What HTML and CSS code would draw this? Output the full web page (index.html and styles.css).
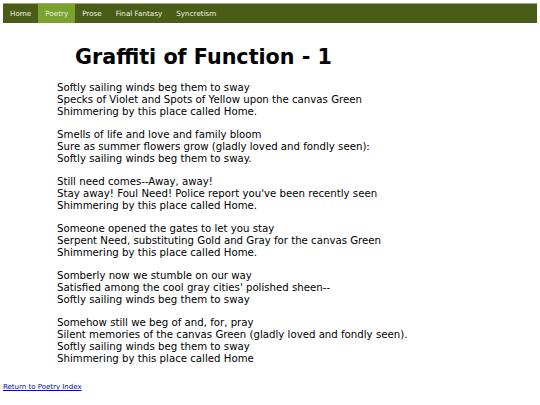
FILE: index.html
```html
<!DOCTYPE html>
<html>
<head>
<meta charset="utf-8">
<link rel="stylesheet" href="styles.css">
</head>
<body>
<nav class="nav">
  <a class="nav-item" href="#">Home</a>
  <a class="nav-item active" href="#">Poetry</a>
  <a class="nav-item" href="#">Prose</a>
  <a class="nav-item" href="#">Final Fantasy</a>
  <a class="nav-item" href="#">Syncretism</a>
</nav>
<main class="content">
  <h1 class="title">Graffiti of Function - 1</h1>
  <div class="poem">
    <p class="stanza">Softly sailing winds beg them to sway<br>Specks of Violet and Spots of Yellow upon the canvas Green<br>Shimmering by this place called Home.</p>
    <p class="stanza">Smells of life and love and family bloom<br>Sure as summer flowers grow (gladly loved and fondly seen):<br>Softly sailing winds beg them to sway.</p>
    <p class="stanza">Still need comes--Away, away!<br>Stay away! Foul Need! Police report you've been recently seen<br>Shimmering by this place called Home.</p>
    <p class="stanza">Someone opened the gates to let you stay<br>Serpent Need, substituting Gold and Gray for the canvas Green<br>Shimmering by this place called Home.</p>
    <p class="stanza">Somberly now we stumble on our way<br>Satisfied among the cool gray cities' polished sheen--<br>Softly sailing winds beg them to sway</p>
    <p class="stanza">Somehow still we beg of and, for, pray<br>Silent memories of the canvas Green (gladly loved and fondly seen).<br>Softly sailing winds beg them to sway<br>Shimmering by this place called Home</p>
  </div>
</main>
<footer class="footer">
  <a class="back" href="#">Return to Poetry Index</a>
</footer>
</body>
</html>
```
FILE: styles.css
```css
html, body {
  margin: 0;
  padding: 0;
  background: #ffffff;
}
body {
  padding: 3px;
  font-family: "DejaVu Sans", Verdana, sans-serif;
  color: #000;
}
.nav {
  display: flex;
  background: #4a5d18;
  border-top: 1px solid #9aa67a;
  height: 19px;
  align-items: stretch;
}
.nav-item {
  display: flex;
  align-items: center;
  padding: 0 7px;
  color: #eef2e0;
  text-decoration: none;
  font-size: 7.2px;
}
.nav-item.active {
  background: #7aa22e;
}
.content {
  padding-left: 54px;
}
.title {
  font-size: 20.7px;
  font-weight: bold;
  margin: 21px 0 12px 18px;
  line-height: 26px;
}
.stanza {
  margin: 0 0 11px 0;
  font-size: 10.2px;
  line-height: 12px;
}
.footer {
  margin-top: 18px;
  font-size: 7px;
  line-height: 8px;
}
.back {
  color: #0000ee;
}
```
